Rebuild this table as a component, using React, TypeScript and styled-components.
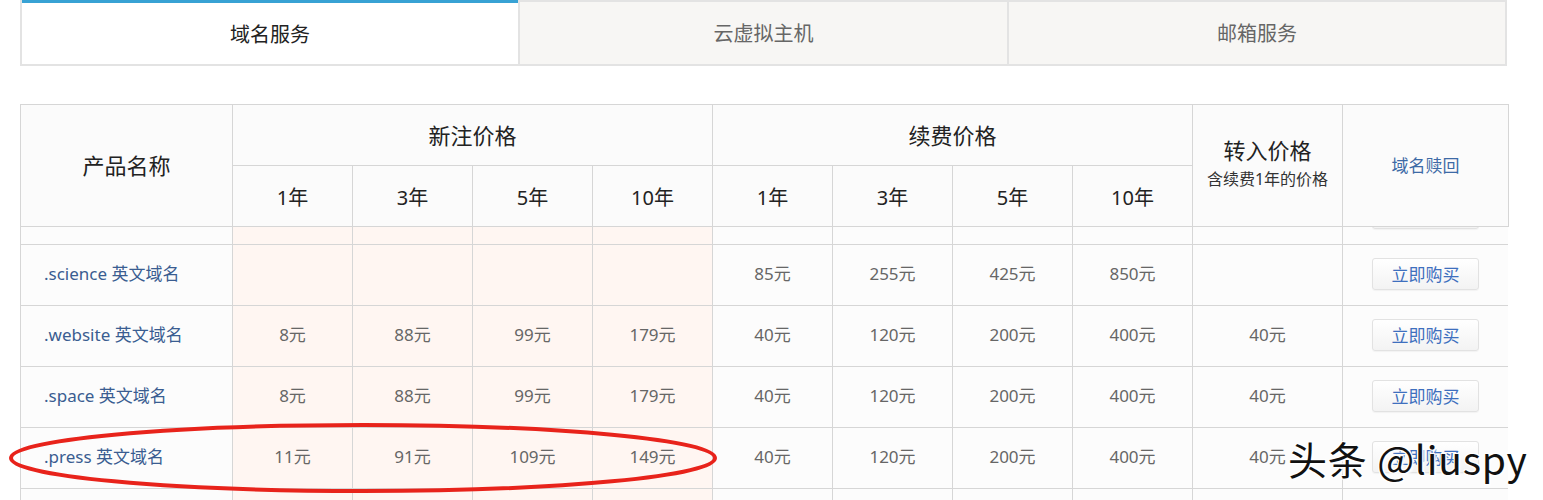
import React from "react";
import styled, { createGlobalStyle } from "styled-components";

const Global = createGlobalStyle`
  html, body { margin: 0; padding: 0; background: #fff; }
  body { font-family: "Noto Sans", "Noto Sans CJK SC", sans-serif; overflow: hidden; }
`;

const Page = styled.div`
  position: relative;
  width: 1543px;
  height: 500px;
  overflow: hidden;
  padding-left: 20px;
  box-sizing: border-box;
`;

const TabBar = styled.div`
  display: flex;
  width: 1487px;
  height: 66px;
  box-sizing: border-box;
  border: 2px solid #e3e3e3;
  border-top: none;
`;

const Tab = styled.div<{ $active?: boolean; $w: number }>`
  flex: 0 0 ${(p) => p.$w}px;
  display: flex;
  align-items: center;
  justify-content: center;
  box-sizing: border-box;
  font-size: 20px;
  color: ${(p) => (p.$active ? "#222" : "#666")};
  background: ${(p) => (p.$active ? "#fff" : "#f7f6f4")};
  border-top: ${(p) => (p.$active ? "3px solid #38a2d4" : "2px solid #e3e3e3")};
  border-left: 2px solid #e3e3e3;
  &:first-child { border-left: none; }
  padding-bottom: ${(p) => (p.$active ? "1px" : "2px")};
`;

const TableArea = styled.div`
  margin-top: 38px;
  width: 1488px;
`;

const Grid = styled.table`
  border-collapse: collapse;
  table-layout: fixed;
  width: 1488px;
  & td, & th {
    border: 1px solid #d6d6d6;
    padding: 0;
    text-align: center;
    box-sizing: border-box;
  }
`;

const HeadRow = styled.tr`
  height: 61px;
  background: #fbfbfb;
`;

const BigHead = styled.th`
  font-size: 22px;
  font-weight: normal;
  color: #222;
  padding-bottom: 3px !important;
`;

const YearHead = styled.th`
  font-size: 20px;
  font-weight: normal;
  color: #222;
`;

const TransferHead = styled.th`
  font-size: 22px;
  font-weight: normal;
  color: #222;
  padding-bottom: 8px !important;
`;

const SubNote = styled.div`
  font-size: 16px;
  color: #333;
  margin-top: 1px;
`;

const RedeemHead = styled.th`
  font-size: 17px;
  font-weight: normal;
  color: #3d6aa6;
  padding-bottom: 2px !important;
`;

const Viewport = styled.div`
  height: 274px;
  overflow: hidden;
`;

const Scrolled = styled.div`
  margin-top: -44px;
`;

const BodyRow = styled.tr`
  height: 61px;
  background: #fcfcfc;
`;

const NameCell = styled.td`
  text-align: left !important;
  padding-left: 23px !important;
  padding-bottom: 5px !important;
  font-size: 17px;
  color: #3a5d91;
`;

const PriceCell = styled.td<{ $pink?: boolean }>`
  font-size: 17px;
  color: #666;
  padding-bottom: 5px !important;
  background: ${(p) => (p.$pink ? "#fff6f2" : "transparent")};
`;

const ActionCell = styled.td`
  padding-bottom: 2px !important;
`;

const BuyButton = styled.button`
  width: 107px;
  height: 32px;
  border: 1px solid #e2e2e2;
  border-radius: 3px;
  background: linear-gradient(#ffffff, #f3f3f3);
  color: #3e6fbe;
  font-family: "Noto Sans CJK SC", sans-serif;
  font-size: 17px;
  padding: 0 0 2px;
  box-shadow: 0 1px 1px rgba(0, 0, 0, 0.04);
`;

const Ellipse = styled.svg`
  position: absolute;
  left: 0;
  top: 418px;
  pointer-events: none;
`;

const Watermark = styled.div`
  position: absolute;
  left: 1288px;
  top: 433px;
  font-family: "Noto Sans CJK SC", sans-serif;
  font-size: 39px;
  line-height: 50px;
  letter-spacing: 0.8px;
  color: #111;
  text-shadow: 1px 1px 0 #fff, -1px -1px 0 #fff, 1px -1px 0 #fff, -1px 1px 0 #fff, 2px 2px 2px rgba(255,255,255,0.8);
  white-space: nowrap;
`;

type Row = {
  name: string;
  reg: string[];
  renew: string[];
  transfer: string;
  button: boolean;
};

const empty = ["", "", "", ""];

const rows: Row[] = [
  { name: "", reg: empty, renew: empty, transfer: "", button: true },
  { name: ".science 英文域名", reg: empty, renew: ["85元", "255元", "425元", "850元"], transfer: "", button: true },
  { name: ".website 英文域名", reg: ["8元", "88元", "99元", "179元"], renew: ["40元", "120元", "200元", "400元"], transfer: "40元", button: true },
  { name: ".space 英文域名", reg: ["8元", "88元", "99元", "179元"], renew: ["40元", "120元", "200元", "400元"], transfer: "40元", button: true },
  { name: ".press 英文域名", reg: ["11元", "91元", "109元", "149元"], renew: ["40元", "120元", "200元", "400元"], transfer: "40元", button: true },
  { name: "", reg: empty, renew: empty, transfer: "", button: false },
];

const widths = [212, 120, 120, 120, 120, 120, 120, 120, 120, 150, 166];
const Cols = () => (
  <colgroup>
    {widths.map((w, i) => (
      <col key={i} style={{ width: w }} />
    ))}
  </colgroup>
);

const years = ["1年", "3年", "5年", "10年"];

export default function App() {
  return (
    <>
      <Global />
      <Page>
        <TabBar>
          <Tab $active $w={496}>域名服务</Tab>
          <Tab $w={489}>云虚拟主机</Tab>
          <Tab $w={498}>邮箱服务</Tab>
        </TabBar>
        <TableArea>
          <Grid>
            <Cols />
            <thead>
              <HeadRow>
                <BigHead rowSpan={2}>产品名称</BigHead>
                <BigHead colSpan={4}>新注价格</BigHead>
                <BigHead colSpan={4}>续费价格</BigHead>
                <TransferHead rowSpan={2}>
                  转入价格
                  <SubNote>含续费1年的价格</SubNote>
                </TransferHead>
                <RedeemHead rowSpan={2}>域名赎回</RedeemHead>
              </HeadRow>
              <HeadRow>
                {years.map((y) => (
                  <YearHead key={"r" + y}>{y}</YearHead>
                ))}
                {years.map((y) => (
                  <YearHead key={"n" + y}>{y}</YearHead>
                ))}
              </HeadRow>
            </thead>
          </Grid>
          <Viewport>
            <Scrolled>
              <Grid>
                <Cols />
                <tbody>
                  {rows.map((r, i) => (
                    <BodyRow key={i}>
                      <NameCell>{r.name}</NameCell>
                      {r.reg.map((v, j) => (
                        <PriceCell key={"g" + j} $pink>
                          {v}
                        </PriceCell>
                      ))}
                      {r.renew.map((v, j) => (
                        <PriceCell key={"n" + j}>{v}</PriceCell>
                      ))}
                      <PriceCell>{r.transfer}</PriceCell>
                      <ActionCell>{r.button ? <BuyButton>立即购买</BuyButton> : null}</ActionCell>
                    </BodyRow>
                  ))}
                </tbody>
              </Grid>
            </Scrolled>
          </Viewport>
        </TableArea>
        <Ellipse width="730" height="82" viewBox="0 0 730 82">
          <ellipse cx="363" cy="40" rx="352" ry="33" fill="none" stroke="#e8231b" strokeWidth="4" />
        </Ellipse>
        <Watermark>头条 @liuspy</Watermark>
      </Page>
    </>
  );
}
